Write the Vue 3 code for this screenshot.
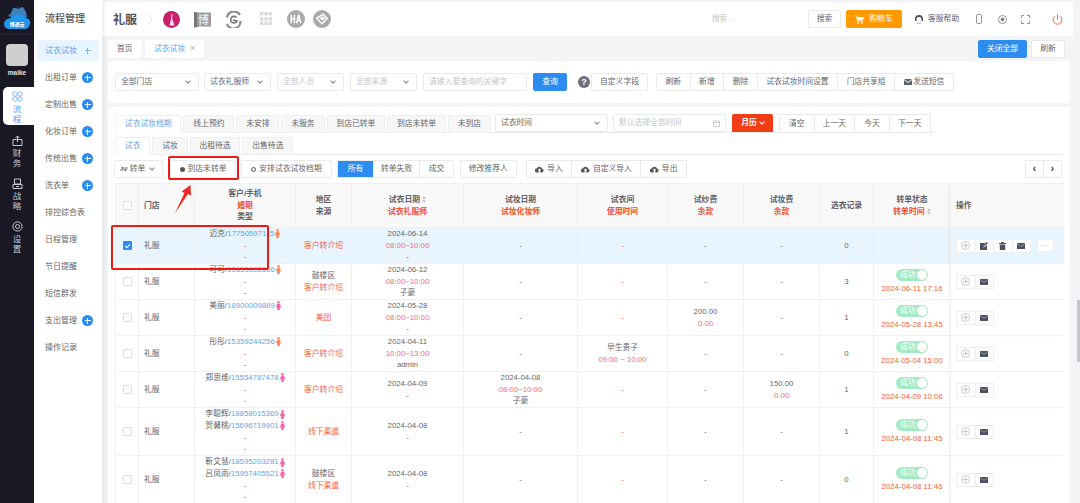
<script setup>
const sideItems = [
  { t: '试衣试妆', p: true, a: true }, { t: '出租订单', p: true }, { t: '定制出售', p: true }, { t: '化妆订单', p: true },
  { t: '传统出售', p: true }, { t: '洗衣单', p: true }, { t: '排控综合表' }, { t: '日程管理' }, { t: '节日提醒' },
  { t: '短信群发' }, { t: '支出管理', p: true }, { t: '操作记录' }
]
const opGroup = ['刷新', '新增', '删除', '试衣试妆时间设置', '门店共享组']
const tabs1 = ['线上预约', '未安排', '未服务', '到店已转单', '到店未转单', '未到店']
const tabs2 = ['试妆', '出租待选', '出售待选']
const days = ['清空', '上一天', '今天', '下一天']
const rows = [
  { sel: true, people: [['迈克', '17750597115', 'o']], area: '', src: '客户转介绍', d: ['2024-06-14', '08:00~10:00', '-'], mk: null, room: null, fee: null, mfee: null, rec: 0, time: '', h: 'r36' },
  { people: [['可可', '13655552866', 'o']], area: '鼓楼区', src: '客户转介绍', d: ['2024-06-12', '08:00~10:00', '子豪'], mk: null, room: null, fee: null, mfee: null, rec: 3, time: '2024-06-11 17:16', h: 'r36' },
  { people: [['美丽', '18900009889', 'p']], area: '', src: '美团', d: ['2024-05-28', '08:00~10:00', '-'], mk: null, room: null, fee: ['200.00', '0.00'], mfee: null, rec: 1, time: '2024-05-28 13:45', h: 'r36' },
  { people: [['彤彤', '15359244256', 'o']], area: '', src: '客户转介绍', d: ['2024-04-11', '10:00~13:00', 'admin'], mk: null, room: ['早生贵子', '09:00 ~ 10:00'], fee: null, mfee: null, rec: 0, time: '2024-05-04 15:00', h: 'r36' },
  { people: [['郑思维', '15554787478', 'p']], area: '', src: '客户转介绍', d: ['2024-04-09', '', '-'], mk: ['2024-04-08', '08:00~10:00', '子豪'], room: null, fee: null, mfee: ['150.00', '0.00'], rec: 1, time: '2024-04-09 10:06', h: 'r36' },
  { people: [['李聪辉', '18858015369', 'p'], ['贺馨桃', '15696719901', 'p']], area: '', src: '线下渠道', d: ['2024-04-08', '', '-'], mk: null, room: null, fee: null, mfee: null, rec: 1, time: '2024-04-08 11:45', h: 'r48' },
  { people: [['靳文慧', '18595203281', 'p'], ['吕凤雨', '15957405521', 'p']], area: '鼓楼区', src: '线下渠道', d: ['2024-04-08', '', '-'], mk: null, room: null, fee: null, mfee: null, rec: 0, time: '2024-04-08 11:46', h: 'r48' }
]
</script>

<template>
  <div class="app">
    <nav class="rail">
      <div class="logo">
        <svg width="28" height="27" viewBox="0 0 28 27">
          <path d="M8 9 L10 4 L20 3 L23 8 L24 13 L20 13 L20 18 L9 18 L8 13 L5 12 Z" fill="#3d7fb8" />
          <path d="M11 3 L15 1 L19 3 L15 5 Z" fill="#23222e" />
          <path d="M8 14 Q9 11 12 12 Q14 9 18 11 Q22 11 23 14 Q28 15 27 20 Q26 25 21 25 L7 25 Q1 25 1 20 Q1 15 8 14 Z" fill="#1f97ec" />
          <text x="14" y="22" text-anchor="middle" class="logotx">博通云</text>
        </svg>
      </div>
      <div class="avatar"></div>
      <div class="uname">maike</div>
      <div class="ritem active">
        <svg width="11" height="11" viewBox="0 0 11 11" fill="none" stroke="#6aa5f2" stroke-width=".8"><circle cx="3" cy="3" r="2.2"/><circle cx="8" cy="3" r="2.2"/><circle cx="3" cy="8" r="2.2"/><circle cx="8" cy="8" r="2.2"/></svg>
        <span>流</span><span>程</span>
      </div>
      <div class="ritem">
        <svg width="11" height="11" viewBox="0 0 11 11" fill="none" stroke="#c9cad0" stroke-width="1"><path d="M1 4.5h9v6H1zM5.5 1v6M3.5 3l2-2 2 2"/></svg>
        <span>财</span><span>务</span>
      </div>
      <div class="ritem">
        <svg width="11" height="11" viewBox="0 0 11 11" fill="none" stroke="#c9cad0" stroke-width="1"><path d="M2.5 1h6v5h-6zM1 6.5h9v4H1zM4 8.5h3"/></svg>
        <span>战</span><span>略</span>
      </div>
      <div class="ritem">
        <svg width="11" height="11" viewBox="0 0 11 11" fill="none" stroke="#c9cad0" stroke-width="1"><circle cx="5.5" cy="5.5" r="4.6"/><circle cx="5.5" cy="5.5" r="2"/></svg>
        <span>设</span><span>置</span>
      </div>
    </nav>

    <aside class="side">
      <h2 class="side-title">流程管理</h2>
      <div v-for="s in sideItems" :key="s.t" class="sitem" :class="{ on: s.a }">
        <span>{{ s.t }}</span>
        <i v-if="s.p" class="plus"></i>
      </div>
    </aside>

    <main class="main">
      <header class="top">
        <strong class="brand">礼服</strong>
        <svg class="chev" width="6" height="14" viewBox="0 0 6 14" fill="none" stroke="#e3e3e6"><path d="M1 1l4 6-4 6"/></svg>
        <svg class="lg l1" width="17" height="17" viewBox="0 0 17 17"><circle cx="8.5" cy="8.5" r="8.5" fill="#c91f6d"/><path d="M8.5 3a1 1 0 0 1 1 1.5l-.3 3 2.3 7h-5l1.6-7z" fill="#f6dbe5"/></svg>
        <svg class="lg l2" width="17" height="17" viewBox="0 0 17 17"><path d="M0 1l4 .6V16l-4 0.6z" fill="#777"/><rect x="3" y="1.5" width="14" height="14" fill="#9a9a9a"/><text x="9.5" y="12.5" text-anchor="middle" class="lgtx">博</text></svg>
        <svg class="lg l3" width="17" height="17" viewBox="0 0 17 17" fill="none"><path d="M15 4A7 7 0 0 0 2 6.5M2 13A7 7 0 0 0 15.5 10" stroke="#8a8a8a" stroke-width="2.2"/><path d="M11.5 6.5A3.3 3.3 0 1 0 12 10L8 9" stroke="#777" stroke-width="1.6"/></svg>
        <svg class="lg l4" width="14" height="14" viewBox="0 0 14 14" fill="#d9d9d9"><rect width="3.4" height="3.4" x="1"/><rect width="3.4" height="3.4" x="5.3"/><rect width="3.4" height="3.4" x="9.6"/><rect width="3.4" height="3.4" x="1" y="5.3"/><rect width="3.4" height="3.4" x="5.3" y="5.3"/><rect width="3.4" height="3.4" x="9.6" y="5.3"/><rect width="3.4" height="3.4" x="1" y="9.6"/><rect width="3.4" height="3.4" x="5.3" y="9.6"/><rect width="3.4" height="3.4" x="9.6" y="9.6"/></svg>
        <svg class="lg l5" width="18" height="18" viewBox="0 0 17 17"><circle cx="8.5" cy="8.5" r="8.5" fill="#a9a9a9"/><path d="M4 4.5v8M7 4.5v8M4 8.5h3M9 12.5l2-8 2 8M9.8 10h2.4" stroke="#fff" stroke-width="1.4" fill="none"/></svg>
        <svg class="lg l6" width="18" height="18" viewBox="0 0 17 17"><circle cx="8.5" cy="8.5" r="8.5" fill="#a9a9a9"/><path d="M3.5 8l6-4 4 4-5 5z" fill="none" stroke="#fff" stroke-width="1.4"/><path d="M6 8l3-2 3 2-3 2z" fill="#fff"/></svg>
        <span class="search-ph">搜索...</span>
        <button class="btn search">搜索</button>
        <button class="btn cart">
          <svg width="9" height="9" viewBox="0 0 9 9" fill="#fff"><path d="M0 .5h1.8L2.2 2H9L8 5.5H2.8l.2 1H8v.8H2.3L1.2 1.3H0z"/><circle cx="3" cy="8.2" r=".8"/><circle cx="7.2" cy="8.2" r=".8"/></svg>
          购物车
        </button>
        <svg class="hd" width="10" height="10" viewBox="0 0 10 10"><path d="M1 5a4 4 0 0 1 8 0v2H7.5V5a2.5 2 0 0 0-5 0v2H1z" fill="#4d4f5c"/><path d="M3 7.2A2 2 0 0 0 7 7.2L6.5 9.5h-3z" fill="#4d4f5c"/></svg>
        <span class="help">客服帮助</span>
        <svg class="tool t1" width="6" height="10" viewBox="0 0 6 10" fill="none" stroke="#77797f" stroke-width=".8"><rect x=".5" y=".5" width="5" height="9" rx="1"/></svg>
        <svg class="tool t2" width="9" height="9" viewBox="0 0 9 9" fill="none" stroke="#77797f" stroke-width=".8"><circle cx="4.5" cy="4.5" r="4"/><circle cx="4.5" cy="4.5" r="1.4" fill="#77797f"/></svg>
        <svg class="tool t3" width="9" height="9" viewBox="0 0 9 9" fill="none" stroke="#77797f" stroke-width=".8"><path d="M.5 3V.5H3M6 .5h2.5V3M8.5 6v2.5H6M3 8.5H.5V6"/></svg>
        <svg class="tool t4" width="11" height="11" viewBox="0 0 11 11" fill="none" stroke="#e9654b" stroke-width="1"><path d="M5.5 .5v5M3 2.2a4.4 4.4 0 1 0 5 0"/></svg>
      </header>

      <div class="tagbar">
        <span class="tag">首页</span>
        <span class="tag cur">试衣试妆<b class="x">×</b></span>
        <span class="spacer"></span>
        <button class="btn primary closeall">关闭全部</button>
        <button class="btn refresh">刷新</button>
      </div>

      <section class="panel p1">
        <div class="sel w84">全部门店<i class="car"></i></div>
        <div class="sel w68">试衣礼服师<i class="car"></i></div>
        <div class="sel w67 ph">全部人员<i class="car"></i></div>
        <div class="sel w67 ph">全部来源<i class="car"></i></div>
        <div class="sel w104 ph">请输入要查询的关键字</div>
        <button class="btn primary query">查询</button>
        <span class="q">?</span>
        <button class="btn custom">自定义字段</button>
        <div class="group">
          <span v-for="o in opGroup" :key="o">{{ o }}</span>
          <span class="mail"><svg width="8" height="6" viewBox="0 0 8 6"><path d="M0 0h8L4 3zM0 1l4 3 4-3v5H0z" fill="#5d6270"/></svg>发送短信</span>
        </div>
      </section>

      <section class="panel p2">
        <div class="tabs t-one">
          <span class="tb cur">试衣试妆档期</span>
          <span v-for="t in tabs1" :key="t" class="tb">{{ t }}</span>
          <div class="sel w113 flat">试衣时间<i class="car"></i></div>
          <div class="sel w113 flat ph datein">默认选择全部时间
            <svg width="7" height="7" viewBox="0 0 7 7" fill="none" stroke="#bbb" stroke-width=".7"><rect x=".4" y="1" width="6.2" height="5.6"/><path d="M.4 2.6h6.2"/></svg>
          </div>
          <span class="cal">月历<i class="car w"></i></span>
          <div class="days"><span v-for="d in days" :key="d">{{ d }}</span></div>
        </div>
        <div class="tabs t-two">
          <span class="tb cur">试衣</span>
          <span v-for="t in tabs2" :key="t" class="tb">{{ t }}</span>
        </div>
        <div class="bar">
          <button class="btn b-turn">
            <svg width="8" height="6" viewBox="0 0 8 6" fill="none" stroke="#555" stroke-width=".8"><path d="M0 4h6M5 3l1.5 1L5 5M8 2H2M3 1L1.5 2 3 3"/></svg>
            转单<i class="car"></i>
          </button>
          <button class="btn b-arr"><i class="dot"></i>到店未转单</button>
          <button class="btn b-plan"><i class="dot ring"></i>安排试衣试妆档期</button>
          <div class="seg"><span class="cur">所有</span><span>转单失败</span><span>成交</span></div>
          <button class="btn b-ref">修改推荐人</button>
          <div class="seg up">
            <span><svg width="9" height="7" viewBox="0 0 9 7"><path d="M2 6.5a2 2 0 0 1-.2-4A2.8 2.8 0 0 1 7 2.6a2 2 0 0 1 0 3.9H5.3V4.2h1L4.5 2.4 2.7 4.2h1v2.3z" fill="#555"/></svg>导入</span>
            <span><svg width="9" height="7" viewBox="0 0 9 7"><path d="M2 6.5a2 2 0 0 1-.2-4A2.8 2.8 0 0 1 7 2.6a2 2 0 0 1 0 3.9H5.3V4.2h1L4.5 2.4 2.7 4.2h1v2.3z" fill="#555"/></svg>自定义导入</span>
            <span><svg width="9" height="7" viewBox="0 0 9 7"><path d="M2 6.5a2 2 0 0 1-.2-4A2.8 2.8 0 0 1 7 2.6a2 2 0 0 1 0 3.9H5.3V4.2h1L4.5 2.4 2.7 4.2h1v2.3z" fill="#555"/></svg>导出</span>
          </div>
          <span class="spacer"></span>
          <div class="pager"><span>‹</span><span>›</span></div>
        </div>

        <table class="grid">
          <colgroup>
            <col class="c23" /><col class="c56" /><col class="c101" /><col class="c56" /><col class="c112" /><col class="c114" />
            <col class="c90" /><col class="c76" /><col class="c76" /><col class="c54" /><col class="c77" /><col class="c113" />
          </colgroup>
          <thead>
            <tr>
              <th><i class="check"></i></th>
              <th class="left">门店</th>
              <th>客户/手机<br /><em>婚期</em><br />类型</th>
              <th>地区<br />来源</th>
              <th>试衣日期 <i class="sort"></i><br /><em>试衣礼服师</em></th>
              <th>试妆日期<br /><em>试妆化妆师</em></th>
              <th>试衣间<br /><em>使用时间</em></th>
              <th>试纱费<br /><em>余款</em></th>
              <th>试妆费<br /><em>余款</em></th>
              <th>选衣记录</th>
              <th>转单状态<br /><em>转单时间</em> <i class="sort"></i></th>
              <th class="left opc">操作</th>
            </tr>
          </thead>
          <tbody>
            <tr v-for="(r, i) in rows" :key="i" :class="[r.h, { picked: r.sel }]">
              <td><i class="check" :class="{ yes: r.sel }"></i></td>
              <td class="left">礼服</td>
              <td>
                <div v-for="p in r.people" :key="p[1]" class="who">
                  <span>{{ p[0] }}/<a>{{ p[1] }}</a></span>
                  <svg width="5" height="9" viewBox="0 0 5 9" :fill="p[2] === 'o' ? '#fb8a5a' : '#ff5fa8'"><circle cx="2.5" cy="1.2" r="1.2"/><path d="M1 2.8h3l1 3.4H3.8V9H1.2V6.2H0z"/></svg>
                </div>
                <div class="red">-</div>
                <div>-</div>
              </td>
              <td><div v-if="r.area">{{ r.area }}</div><div class="red">{{ r.src }}</div></td>
              <td>
                <div>{{ r.d[0] }}</div>
                <div v-if="r.d[1]" class="rose">{{ r.d[1] }}</div>
                <div>{{ r.d[2] }}</div>
              </td>
              <td>
                <template v-if="r.mk">
                  <div>{{ r.mk[0] }}</div>
                  <div class="rose">{{ r.mk[1] }}</div>
                  <div>{{ r.mk[2] }}</div>
                </template>
                <template v-else>-</template>
              </td>
              <td>
                <template v-if="r.room">
                  <div>{{ r.room[0] }}</div>
                  <div class="rose">{{ r.room[1] }}</div>
                </template>
                <span v-else class="red">-</span>
              </td>
              <td>
                <template v-if="r.fee"><div>{{ r.fee[0] }}</div><div class="rose">{{ r.fee[1] }}</div></template>
                <template v-else>-</template>
              </td>
              <td>
                <template v-if="r.mfee"><div>{{ r.mfee[0] }}</div><div class="rose">{{ r.mfee[1] }}</div></template>
                <template v-else>-</template>
              </td>
              <td>{{ r.rec }}</td>
              <td>
                <template v-if="r.time">
                  <div class="swrap"><span class="sw">成功<i></i></span></div>
                  <div class="red tm">{{ r.time }}</div>
                </template>
                <span v-else class="red pale">-</span>
              </td>
              <td class="left opc">
                <div class="ops">
                  <span class="opb">
                    <svg width="9" height="9" viewBox="0 0 9 9" fill="none" stroke="#b4b6bb" stroke-width=".7"><circle cx="4.5" cy="4.5" r="4"/><path d="M4.5 2v5M2 4.5h5"/></svg>
                  </span>
                  <span v-if="r.sel" class="opb">
                    <svg width="8" height="8" viewBox="0 0 8 8" fill="#4c5162"><path d="M0 1h5.5L4 3 3 5.5 5.5 4.5 7 3v5H0z"/><path d="M6.6 0L8 1.2 4 4.6l-1 .3.3-1z"/></svg>
                  </span>
                  <span v-if="r.sel" class="opb">
                    <svg width="7" height="8" viewBox="0 0 7 8" fill="#4c5162"><path d="M0 1h2.2V0h2.6v1H7v1H0zM.8 2.6h5.4V8H.8z"/></svg>
                  </span>
                  <span class="opb">
                    <svg width="8" height="6" viewBox="0 0 8 6"><rect width="8" height="6" rx=".6" fill="#4c5162"/><path d="M.5 1L4 3.4 7.5 1" fill="none" stroke="#d8dae0" stroke-width=".5"/></svg>
                  </span>
                  <span v-if="r.sel" class="more">···</span>
                </div>
              </td>
            </tr>
          </tbody>
        </table>
      </section>
    </main>

    <div class="thumb"></div>
    <div class="mark m1"></div>
    <div class="mark m2"></div>
    <svg class="arrow" width="18" height="30" viewBox="0 0 18 30"><path d="M1 29L10.4 9 7.6 7.5 16.5 1 17 11.5 14 10z" fill="#ee2a22"/></svg>
  </div>
</template>

<style>
html, body { margin: 0; height: 503px; overflow: hidden; background: #f3f4f6; }
</style>

<style scoped>
.app {
  position: relative; display: flex; width: 1080px; height: 503px; overflow: hidden;
  font: 7.8px/11.7px "Liberation Sans", "Noto Sans CJK SC", sans-serif; color: #666; background: #f3f4f6;
}
i { font-style: normal; display: inline-block; }
button { font: inherit; color: inherit; cursor: default; margin: 0; }

.rail { flex: 0 0 34px; background: #181925; display: flex; flex-direction: column; align-items: center; color: #c9cad0; }
.logo { height: 35px; width: 100%; box-sizing: border-box; padding: 4px 0 0 3px; border-bottom: 1px solid #232430; flex: none; }
.logotx { font-size: 5px; fill: #fff; font-weight: 700; font-family: "Noto Sans CJK SC", sans-serif; }
.avatar { width: 22px; height: 22px; margin-top: 9px; background: #cfcfcf; border-radius: 4px; flex: none; }
.uname { margin-top: 2px; font-size: 6.5px; font-weight: 700; color: #e3e3e6; line-height: 10px; }
.ritem { width: 31px; height: 33px; align-self: flex-end; margin-top: 10px; padding-right: 3px; box-sizing: border-box; display: flex; flex-direction: column; align-items: center; font-size: 8.5px; line-height: 9.5px; flex: none; }
.ritem svg { margin-bottom: 3px; flex: none; }
.ritem.active { height: 38px; margin-top: 9px; padding-top: 4px; background: #fff; color: #5a9cf0; border-radius: 5px 0 0 5px; }

.side { flex: 0 0 68px; background: #fff; }
.side-title { margin: 0; padding: 12px 0 15px 11px; font-size: 10px; line-height: 13px; font-weight: 500; color: #555; }
.sitem { height: 21px; margin: 0 3px 6px; padding: 0 4px 0 8px; display: flex; align-items: center; justify-content: space-between; border-radius: 2px; font-size: 8px; color: #666; }
.sitem.on { background: #e8f4fe; color: #5ea7ec; }
.plus { position: relative; width: 11px; height: 11px; margin-right: 2px; border-radius: 50%; background: #2a8cf0; }
.plus::before, .plus::after { content: ""; position: absolute; background: #fff; }
.plus::before { left: 2.5px; top: 5px; width: 6px; height: 1px; }
.plus::after { left: 5px; top: 2.5px; width: 1px; height: 6px; }
.sitem.on .plus { background: transparent; }
.sitem.on .plus::before, .sitem.on .plus::after { background: #7db8f0; }

.main { flex: 1; min-width: 0; padding-left: 6px; padding-right: 10px; background: linear-gradient(90deg, #e6e7ea, #f3f4f6 6px); display: flex; flex-direction: column; }
.top {
  height: 35px; margin: 1px -3px 0 -6px; padding-left: 11px; background: #fff; display: flex; align-items: center; flex: none;
  box-shadow: inset 6px 0 5px -4px rgba(0,0,0,.08); position: relative; border-top: 1px solid #eee; box-sizing: border-box;
}
.brand { font-size: 12px; font-weight: 600; color: #4d5360; width: 25px; font-family: "Noto Sans CJK SC", sans-serif; }
.chev { margin-left: 9px; }
.lg { flex: none; }
.l1 { margin-left: 10px; }
.l2 { margin-left: 14px; }
.l3 { margin-left: 14px; }
.l4 { margin-left: 17px; }
.l5 { margin-left: 14px; }
.l6 { margin-left: 8px; }
.lgtx { font-size: 11px; fill: #e6e6e6; font-weight: 700; font-family: "Noto Sans CJK SC", sans-serif; }
.search-ph { margin-left: 381px; width: 96px; font-size: 7.5px; color: #c4c4c4; flex: none; }
.btn { height: 18px; padding: 0 9px; background: #fff; border: 1px solid #e8eaec; border-radius: 2px; box-sizing: border-box; display: inline-flex; align-items: center; justify-content: center; flex: none; white-space: nowrap; color: #666; }
.search { width: 33px; padding: 0; }
.cart { width: 56px; margin-left: 5px; padding: 0; background: #ff9900; border-color: #ff9900; color: #fff; gap: 5px; }
.hd { margin-left: 12px; flex: none; }
.help { margin-left: 4px; width: 35px; flex: none; color: #5d6270; }
.tool { flex: none; position: relative; }
.t1 { margin-left: 13px; }
.t2 { margin-left: 16px; }
.t3 { margin-left: 14px; }
.t4 { margin-left: 22px; }

.tagbar { height: 24px; flex: none; display: flex; align-items: center; padding-top: 1px; box-sizing: border-box; }
.tag { height: 18px; padding: 0 9px; margin-right: 3px; display: inline-flex; align-items: center; background: #fff; border-radius: 2px; }
.tag:first-child { width: 34px; box-sizing: border-box; }
.tag.cur { color: #5ea7ec; }
.x { font-weight: 400; color: #aaa; margin-left: 5px; font-size: 8.5px; }
.spacer { flex: 1; }
.primary { background: #2d8cf0; border-color: #2d8cf0; color: #fff; }
.closeall { width: 49px; padding: 0; }
.refresh { width: 34px; padding: 0; margin-left: 4px; margin-right: 5px; }

.panel { background: #fff; border-radius: 3px; flex: none; }
.p1 { height: 42px; margin-top: 1px; padding: 12px 7px 0; box-sizing: border-box; display: flex; align-items: flex-start; }
.sel { height: 18px; padding: 0 5px; box-sizing: border-box; border: 1px solid #e8eaec; border-radius: 2px; display: flex; align-items: center; justify-content: space-between; flex: none; color: #666; }
.ph { color: #c4c6cb; }
.w84 { width: 84px; margin-right: 5px; }
.w68 { width: 67px; margin-right: 6px; }
.w67 { width: 67px; margin-right: 6px; }
.w104 { width: 104px; margin-right: 6px; }
.car { width: 3px; height: 3px; margin: 0 3px 2px; border-right: 1px solid #80848f; border-bottom: 1px solid #80848f; transform: rotate(45deg); flex: none; }
.car.w { border-color: #fff; margin: 0 0 2px 3px; }
.query { width: 34px; padding: 0; }
.q { width: 12px; height: 12px; margin: 3px 1px 0 11px; border-radius: 50%; background: #6b7080; color: #fff; font-weight: 700; font-size: 9px; line-height: 12px; text-align: center; flex: none; }
.custom { width: 57px; padding: 0; }
.group { display: flex; margin-left: 8px; height: 18px; border: 1px solid #e8eaec; border-radius: 2px; box-sizing: border-box; flex: none; }
.group span { padding: 0 8.5px; display: flex; align-items: center; border-left: 1px solid #e8eaec; white-space: nowrap; }
.group span:first-child { border-left: 0; }
.group .mail { gap: 1px; padding: 0 9px; }

.p2 { flex: 1; margin-top: 4px; padding: 7px 7px 0; box-sizing: border-box; min-height: 0; overflow: hidden; border-radius: 3px 3px 0 0; }
.tabs { display: flex; align-items: flex-end; gap: 2px; border-bottom: 1px solid #e8eaec; box-sizing: border-box; }
.t-one { height: 19px; width: 819px; }
.t-two { height: 19px; margin-top: 3px; width: 948px; }
.tb { height: 18px; padding: 0 8.85px; margin-bottom: -1px; box-sizing: border-box; flex: none; background: #f7f7f8; border: 1px solid #eceef0; border-radius: 2px 2px 0 0; display: flex; align-items: center; }
.tb.cur { background: #fff; color: #5ea7ec; border-bottom-color: #fff; }
.t-one .sel { margin: 0 0 0 2px; height: 18px; }
.t-one .w113:first-of-type { margin-left: 2px; }
.w113 { width: 113px; }
.t-one .datein { margin-left: 3px; }
.cal { margin-left: 4px; width: 41px; height: 18px; background: #f03d16; color: #fff; border-radius: 2px 2px 0 0; display: flex; align-items: center; justify-content: center; flex: none; font-weight: 700; }
.days { display: flex; margin-left: 4px; flex: none; height: 18px; border: 1px solid #e8eaec; border-bottom: 0; box-sizing: border-box; }
.days span { padding: 0 9px; display: flex; align-items: center; border-left: 1px solid #e8eaec; white-space: nowrap; }
.days span:first-child { border-left: 0; }
.days span:nth-child(even) { padding: 0 8.2px; }

.bar { display: flex; align-items: center; height: 18px; margin-top: 5px; }
.b-turn { width: 49px; margin-left: -1px; padding: 0; gap: 2px; }
.b-arr { width: 66px; margin-left: 7px; padding: 0; gap: 3px; }
.b-plan { width: 91px; margin-left: 5px; padding: 0; gap: 3px; }
.dot { width: 5px; height: 5px; border-radius: 50%; background: #555; }
.dot.ring { background: #fff; border: 1.4px solid #555; box-sizing: border-box; }
.seg { display: flex; height: 18px; margin-left: 5px; border: 1px solid #e8eaec; border-radius: 2px; box-sizing: border-box; flex: none; }
.seg span { padding: 0 7px; display: flex; align-items: center; gap: 3px; border-left: 1px solid #e8eaec; white-space: nowrap; }
.seg span:first-child { border-left: 0; }
.seg span:nth-child(3) { padding: 0 8.5px; }
.seg .cur { background: #2d8cf0; color: #fff; width: 35px; box-sizing: border-box; justify-content: center; }
.b-ref { width: 57px; margin-left: 6px; padding: 0; }
.up { margin-left: 9px; }
.up span { padding: 0 8.5px; }
.pager { display: flex; height: 18px; flex: none; border: 1px solid #e8eaec; box-sizing: border-box; border-radius: 2px; margin-right: 1px; }
.pager span { width: 17px; display: flex; align-items: center; justify-content: center; font-weight: 700; font-size: 10px; color: #333; }
.pager span + span { border-left: 1px solid #e8eaec; }

.grid { table-layout: fixed; width: 948px; border-collapse: collapse; margin-top: 5px; text-align: center; line-height: 11.66px; }
.c23 { width: 23px; } .c56 { width: 56px; } .c101 { width: 101px; } .c112 { width: 112px; } .c114 { width: 114px; }
.c90 { width: 90px; } .c76 { width: 76px; } .c54 { width: 54px; } .c77 { width: 77px; } .c113 { width: 113px; }
.grid th, .grid td { border: 1px solid #eff0f2; padding: 0; vertical-align: middle; font-weight: 400; }
.grid th { height: 43px; background: #f8f8f9; font-weight: 700; color: #5f6267; }
.grid th em { font-style: normal; color: #f04f2c; }
.r36 td { height: 35px; }
.r48 td { height: 47px; }
.picked td { background: #e8f5fe; }
.grid .left { text-align: left; padding-left: 5px; }
.grid .opc { box-shadow: -3px 0 3px -1px rgba(0,0,0,.06); border-right: 0; }
.check { width: 9px; height: 9px; border: 1px solid #dcdee2; background: #fff; border-radius: 1px; vertical-align: middle; position: relative; box-sizing: border-box; }
.check.yes { background: #2d8cf0; border-color: #2d8cf0; }
.check.yes::after { content: ""; position: absolute; left: 2.5px; top: .5px; width: 2px; height: 4px; border-right: 1px solid #fff; border-bottom: 1px solid #fff; transform: rotate(45deg); }
.sort { width: 4px; height: 7px; vertical-align: middle; position: relative; }
.sort::before, .sort::after { content: ""; position: absolute; left: 0; border-left: 2px solid transparent; border-right: 2px solid transparent; }
.sort::before { top: 0; border-bottom: 3px solid #c5c8ce; }
.sort::after { bottom: 0; border-top: 3px solid #c5c8ce; }
.who { white-space: nowrap; height: 11.66px; display: flex; align-items: center; justify-content: center; gap: 1px; }
.who a { color: #5ea7ec; }
.who svg { flex: none; }
.red { color: #f5623d; }
.rose { color: #fb6a70; }
.pale { opacity: .5; }
.tm { margin-top: 1px; white-space: nowrap; }
.swrap { height: 13px; display: flex; justify-content: center; }
.sw { position: relative; display: block; width: 32px; height: 12px; line-height: 12px; border-radius: 6px; background: #a3e9c2; color: #fff; text-align: left; padding-left: 4px; box-sizing: border-box; }
.sw i { position: absolute; right: 1px; top: 1px; width: 10px; height: 10px; background: #fff; border-radius: 50%; }
.ops { display: flex; align-items: center; }
.opb { width: 19.5px; height: 14px; background: #fff; border: 1px solid #eceef0; margin-left: -1px; box-sizing: border-box; display: flex; align-items: center; justify-content: center; }
.opb:first-child { margin-left: 0; }
.more { width: 17px; height: 13px; margin-left: 6px; background: #fff; border: 1px solid #eceef0; border-radius: 2px; box-sizing: border-box; color: #a3a6ab; display: flex; align-items: center; justify-content: center; line-height: 1; }

.thumb { position: absolute; right: 0; top: 300px; width: 3px; height: 62px; background: #c4c5c9; }
.mark { position: absolute; border: 2px solid #ec1b16; border-radius: 2px; box-sizing: border-box; pointer-events: none; }
.m1 { left: 168px; top: 156px; width: 71px; height: 24px; }
.m2 { left: 111px; top: 225px; width: 158px; height: 45px; }
.arrow { position: absolute; left: 174px; top: 184px; }
</style>
